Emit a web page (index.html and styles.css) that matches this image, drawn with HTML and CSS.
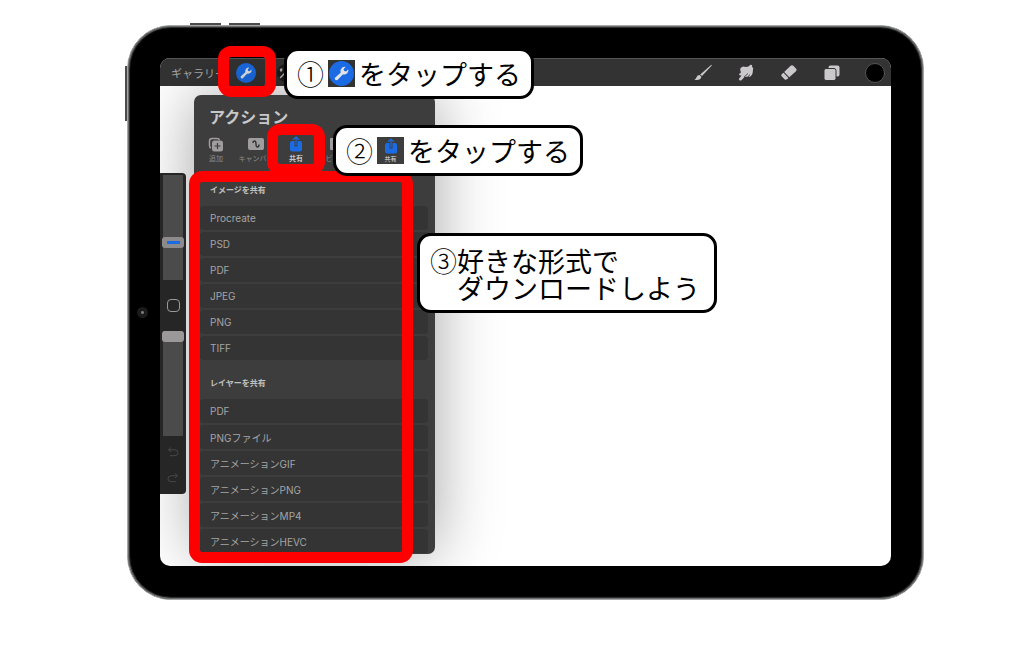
FILE: index.html
```html
<!DOCTYPE html>
<html lang="ja">
<head>
<meta charset="utf-8">
<title>アクション</title>
<link rel="stylesheet" href="styles.css">
</head>
<body>
<svg class="defs" aria-hidden="true">
  <symbol id="wrench" viewBox="0 0 20 20">
    <circle cx="10" cy="10" r="10" fill="#1b6ce4"/>
    <path d="M5 15.2 L4.6 13.6 L9.3 9.3 Q8.8 6.6 10.6 5.2 Q12 4.2 13.2 4.7 L11.6 6.6 L12.2 8 L13.7 8.3 L15.4 6.6 Q16 8.4 14.6 9.8 Q13 11.2 11 10.7 L6.6 15.4 Z" fill="#e4e4e8"/>
  </symbol>
  <symbol id="share" viewBox="0 0 14 16">
    <path d="M3 5 H5.500 V10.500 H8.500 V5 H11 Q13 5 13 7 V13.500 Q13 15.500 11 15.500 H3 Q1 15.500 1 13.500 V7 Q1 5 3 5 Z" fill="#1b6ce4"/>
    <path d="M7 9.500 V1.200 M4 3.800 L7 1 L10 3.800" fill="none" stroke="#1b6ce4" stroke-width="1.200"/>
  </symbol>
</svg>
<main class="stage">
  <div class="device">
    <span class="key key-up"></span>
    <span class="key key-down"></span>
    <span class="key key-side"></span>
    <span class="camera"></span>
    <div class="screen">
      <header class="toolbar">
        <button class="gallery">ギャラリー</button>
        <button class="tool" aria-label="アクション"><svg width="20" height="20"><use href="#wrench"/></svg></button>
        <button class="tool wand" aria-label="調整"><svg width="20" height="20" viewBox="0 0 20 20"><circle cx="10" cy="10" r="9" fill="#1c1c1c"/><path d="M4 15 L14 5 M4 6 L6 8 M6 5.500 L4.500 8.500" stroke="#b4b4b6" stroke-width="1.500"/></svg></button>
        <div class="tools">
          <button class="tool" aria-label="ブラシ"><svg width="20" height="20" viewBox="0 0 20 20"><path d="M18.400 1.800 Q19 2 18.600 2.800 L9 13 L7.200 11.400 Z M6.600 12 L8.400 13.700 Q8 16.400 5.500 16.800 Q3 17.200 1.400 17 Q3 16 3.500 14.300 Q4.200 12 6.600 12 Z" fill="#cbc8cc"/></svg></button>
          <button class="tool" aria-label="ぼかし"><svg width="20" height="20" viewBox="0 0 20 20"><path d="M4.500 5 L7 3.600 L10 4 L12.500 3.400 L14.500 1.800 Q16.800 1.600 16 4 L17.200 5 L16.800 8.500 Q16.800 12 13.500 14 L12 13.600 L8.500 14 L5.500 17.300 Q3.500 18.300 2.800 16 L5.500 12.600 Q3 12.800 3 11 L5 9.500 Q3.600 7 4.500 5 Z" fill="#cbc8cc"/><path d="M8 14 L12 10.500 M12.500 14 L13.500 11.500" stroke="#333" stroke-width=".8"/></svg></button>
          <button class="tool" aria-label="消しゴム"><svg width="20" height="20" viewBox="0 0 20 20"><path d="M11.600 2.800 Q13 1.700 14.300 2.800 L17.200 5.700 Q18.200 7 17 8.200 L10.300 14.300 L5.200 9 Z M4.500 9.700 L9.500 15 L8 16.300 Q6.700 17.300 5.500 16.200 L2.600 13.200 Q1.700 12 2.900 11 Z" fill="#cbc8cc"/></svg></button>
          <button class="tool" aria-label="レイヤー"><svg width="20" height="20" viewBox="0 0 20 20"><rect x="6.500" y="2.500" width="11" height="11" rx="2" fill="#cbc8cc"/><rect x="2" y="5.500" width="12" height="12" rx="2" fill="#cbc8cc" stroke="#333"/></svg></button>
          <button class="tool" aria-label="カラー"><span class="swatch"></span></button>
        </div>
      </header>
      <div class="workspace">
        <aside class="sidebar">
          <input class="slider" type="range" min="0" max="100" value="34" aria-label="ブラシサイズ">
          <button class="modify" aria-label="変更"></button>
          <input class="slider plain" type="range" min="0" max="100" value="100" aria-label="不透明度">
          <button class="history" aria-label="取り消す"><svg width="12" height="10" viewBox="0 0 12 10"><path d="M4 .5 L1.500 2.800 L4 5 M1.500 2.800 H8 Q11 3 11 5.800 Q11 8.500 8 8.700 H3" fill="none" stroke="#484848"/></svg></button>
          <button class="history" aria-label="やり直す"><svg width="12" height="10" viewBox="0 0 12 10"><path d="M8 .5 L10.500 2.800 L8 5 M10.500 2.800 H4 Q1 3 1 5.800 Q1 8.500 4 8.700 H9" fill="none" stroke="#484848"/></svg></button>
        </aside>
        <section class="panel">
          <h1>アクション</h1>
          <nav class="tabs">
            <button class="tab"><svg width="18" height="16" viewBox="0 0 18 16"><path d="M4 12 Q2.500 11.500 2.500 9.500 V5 Q2.500 2.500 5 2.500 H10 Q12 2.500 12.500 4" fill="none" stroke="#a09d9f" stroke-width="1.500"/><rect x="5" y="4.500" width="11" height="11" rx="2.500" fill="#a09d9f"/><path d="M10.500 7 V13 M7.500 10 H13.500" stroke="#3d3d3d" stroke-width="1.200"/></svg>追加</button>
            <button class="tab"><svg width="18" height="16" viewBox="0 0 18 16"><rect x="1" y="2" width="16" height="12" rx="2" fill="#a09d9f"/><path d="M6 7 Q6 5 7.500 5 Q9 5 9 8 Q9 11 10.500 11 Q12 11 12 8.500" fill="none" stroke="#333" stroke-width="1.400"/></svg>キャンバス</button>
            <button class="tab active"><svg width="14" height="16"><use href="#share"/></svg>共有</button>
            <button class="tab"><svg width="12" height="16" viewBox="0 0 12 16"><rect y="2" width="12" height="12" rx="1" fill="#a09d9f"/></svg>ビデオ</button>
          </nav>
          <h2>イメージを共有</h2>
          <ul class="rows">
            <li><button>Procreate</button></li>
            <li><button>PSD</button></li>
            <li><button>PDF</button></li>
            <li><button>JPEG</button></li>
            <li><button>PNG</button></li>
            <li><button>TIFF</button></li>
          </ul>
          <h2>レイヤーを共有</h2>
          <ul class="rows">
            <li><button>PDF</button></li>
            <li><button>PNGファイル</button></li>
            <li><button>アニメーションGIF</button></li>
            <li><button>アニメーションPNG</button></li>
            <li><button>アニメーションMP4</button></li>
            <li><button>アニメーションHEVC</button></li>
          </ul>
        </section>
      </div>
    </div>
  </div>

  <div class="mark mark-list"></div>
  <div class="mark mark-share"></div>
  <div class="mark mark-wrench"></div>
  <p class="callout step-one"><span class="number">①</span><span class="chip"><svg width="25" height="25"><use href="#wrench"/></svg></span><span>をタップする</span></p>
  <p class="callout step-two"><span class="number">②</span><span class="chip share-chip"><svg width="14" height="16"><use href="#share"/></svg><small>共有</small></span><span>をタップする</span></p>
  <p class="callout step-three"><span class="number">③</span><span>好きな形式で<br>ダウンロードしよう</span></p>
</main>
</body>
</html>
```
FILE: styles.css
```css
* { box-sizing: border-box; }

body {
  margin: 0;
  background: #fff;
  font-family: Inter, "Noto Sans CJK JP", sans-serif;
}

button {
  margin: 0;
  padding: 0;
  border: 0;
  background: none;
  color: inherit;
  font: inherit;
}

.defs { position: absolute; width: 0; height: 0; }

.stage {
  position: relative;
  padding: 25px 100px 45px 127px;
}

/* Tablet body */
.device {
  position: relative;
  padding: 32px 32px 33px;
  border: 1px solid #a4a6a7;
  border-radius: 44px;
  background: #000;
  box-shadow: inset 0 0 0 1px #6a6c6d, inset 0 0 1px 2px #333;
}

.key { position: absolute; background: #4b4b4b; }
.key-up { top: -3px; left: 62px; width: 31px; height: 2px; }
.key-down { top: -3px; left: 101px; width: 31px; height: 2px; }
.key-side { top: 40px; left: -3px; width: 2px; height: 55px; }

.camera {
  position: absolute;
  top: 281px;
  left: 9px;
  width: 11px;
  height: 11px;
  border-radius: 50%;
  background: radial-gradient(#777 0 1px, #1b1b1b 2px);
}

.screen {
  overflow: hidden;
  border-radius: 10px;
  background: #fff;
}

.toolbar {
  display: flex;
  align-items: center;
  height: 28px;
  padding: 0 6px 0 11px;
  border-top: 1px solid #555;
  background: #333;
}

.gallery {
  width: 65px;
  color: #aaa;
  font-size: 11px;
  text-align: left;
  white-space: nowrap;
}

.tool { display: grid; place-items: center; width: 20px; height: 20px; }
.wand { margin-left: 20px; }
.tools { display: flex; gap: 23px; margin-left: auto; }

.swatch {
  width: 20px;
  height: 20px;
  border: 1px solid #555;
  border-radius: 50%;
  background: #000;
}

.workspace {
  display: flex;
  align-items: flex-start;
  gap: 8px;
  padding: 9px 0 12px;
}

/* Brush controls */
.sidebar {
  display: flex;
  flex-direction: column;
  align-items: center;
  width: 26px;
  height: 321px;
  margin-top: 78px;
  padding-top: 2px;
  border-radius: 0 4px 4px 0;
  background: #262626;
  position: relative;
  z-index: 1;
}

.slider {
  flex: none;
  width: 22px;
  height: 105px;
  margin: 0;
  appearance: none;
  writing-mode: vertical-lr;
  direction: rtl;
  background: linear-gradient(#4b4b4b, #4b4b4b) center / 20px 100% no-repeat;
}

.slider::-webkit-slider-thumb {
  appearance: none;
  width: 22px;
  height: 11px;
  border-radius: 3px;
  background: linear-gradient(#1b6ce4, #1b6ce4) center / 13px 3px no-repeat, #8d8a8c;
}

.slider.plain::-webkit-slider-thumb { background: #9b989a; }

.modify {
  flex: none;
  width: 13px;
  height: 13px;
  margin: 19px 0;
  border: 1px solid #999;
  border-radius: 4px;
}

.history { display: grid; place-items: center; height: 26px; }
.plain + .history { margin-top: 3px; }

/* Actions popover */
.panel {
  width: 241px;
  height: 459px;
  padding: 13px 7px 0 6px;
  overflow: hidden;
  border-radius: 7px;
  background: #3d3d3d;
  box-shadow: 0 0 64px rgba(0, 0, 0, .36);
  color: #a5a5a5;
}

.panel h1 {
  margin: 0 0 10px 9px;
  color: #c8c8c8;
  font-size: 16px;
  line-height: 18px;
}

.tabs {
  display: flex;
  margin-left: -4px;
  font-size: 7px;
  line-height: 10px;
}

.tab {
  display: flex;
  flex: none;
  flex-direction: column;
  align-items: center;
  gap: 2px;
  width: 40px;
  color: #8b8b8b;
  white-space: nowrap;
}

.tab.active { color: #e0e0e0; font-weight: 500; }

.panel h2 {
  margin: 0;
  padding: 18px 10px 8px;
  color: #c0c0c0;
  font-size: 8px;
  line-height: 16px;
}

.rows {
  display: grid;
  gap: 2px;
  margin: 0;
  padding: 0;
  list-style: none;
}

.rows + h2 { padding: 15px 10px 8px; }

.rows button {
  display: block;
  width: 100%;
  height: 24px;
  padding: 0 10px;
  border-radius: 4px;
  background: #343434;
  font-size: 10px;
  text-align: left;
}

/* Red highlights */
.mark {
  position: absolute;
  z-index: 2;
  border: 11px solid #f00;
  border-radius: 13px;
}

.mark-list { top: 171px; left: 189px; width: 224px; height: 392px; }
.mark-share { top: 124px; left: 267px; width: 58px; height: 51px; }
.mark-wrench { top: 46px; left: 218px; width: 58px; height: 51px; }

/* Step balloons */
.callout {
  position: absolute;
  z-index: 3;
  display: flex;
  align-items: center;
  gap: 4px;
  margin: 0;
  padding: 9px 10px;
  border: 3px solid #000;
  border-radius: 14px;
  background: #fff;
  color: #000;
  font-family: "Noto Sans CJK JP", sans-serif;
  font-size: 27px;
  line-height: 27px;
  white-space: nowrap;
}

.number { font-weight: 300; }

.step-one { top: 48px; left: 284px; }
.step-two { top: 125px; left: 333px; }

.step-three {
  top: 233px;
  left: 417px;
  align-items: flex-start;
  gap: 0;
  padding: 11px 14px 9px 10px;
}

.chip {
  display: flex;
  flex-direction: column;
  align-items: center;
  justify-content: center;
  width: 27px;
  height: 27px;
  background: #333;
}

.share-chip { background: #3d3d3d; }

.chip small {
  color: #e0e0e0;
  font-size: 6px;
  line-height: 9px;
}
```
